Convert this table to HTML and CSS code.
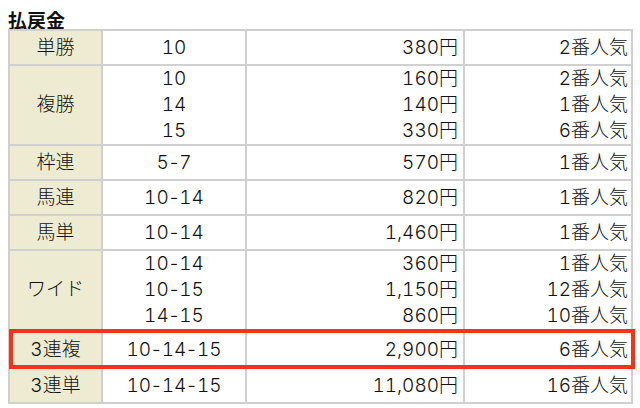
FILE: index.html
```html
<!DOCTYPE html>
<html lang="ja">
<head>
<meta charset="utf-8">
<link rel="stylesheet" href="styles.css">
</head>
<body>
<div class="payout">
  <h2 class="title">払戻金</h2>
  <div class="table-wrap">
    <table class="pay-table">
      <colgroup>
        <col class="c-type"><col class="c-num"><col class="c-yen"><col class="c-pop">
      </colgroup>
      <tr>
        <th class="type">単勝</th><td class="num">10</td><td class="yen">380円</td><td class="pop">2番人気</td>
      </tr>
      <tr class="multi">
        <th class="type">複勝</th><td class="num">10<br>14<br>15</td><td class="yen">160円<br>140円<br>330円</td><td class="pop">2番人気<br>1番人気<br>6番人気</td>
      </tr>
      <tr>
        <th class="type">枠連</th><td class="num">5<span class="dash">-</span>7</td><td class="yen">570円</td><td class="pop">1番人気</td>
      </tr>
      <tr>
        <th class="type">馬連</th><td class="num">10<span class="dash">-</span>14</td><td class="yen">820円</td><td class="pop">1番人気</td>
      </tr>
      <tr>
        <th class="type">馬単</th><td class="num">10<span class="dash">-</span>14</td><td class="yen">1,460円</td><td class="pop">1番人気</td>
      </tr>
      <tr class="multi">
        <th class="type">ワイド</th><td class="num">10<span class="dash">-</span>14<br>10<span class="dash">-</span>15<br>14<span class="dash">-</span>15</td><td class="yen">360円<br>1,150円<br>860円</td><td class="pop">1番人気<br>12番人気<br>10番人気</td>
      </tr>
      <tr class="tall">
        <th class="type">3連複</th><td class="num">10<span class="dash">-</span>14<span class="dash">-</span>15</td><td class="yen">2,900円</td><td class="pop">6番人気</td>
      </tr>
      <tr>
        <th class="type">3連単</th><td class="num">10<span class="dash">-</span>14<span class="dash">-</span>15</td><td class="yen">11,080円</td><td class="pop">16番人気</td>
      </tr>
    </table>
    <div class="highlight"></div>
  </div>
</div>
</body>
</html>
```
FILE: styles.css
```css
* {
  box-sizing: border-box;
}

html, body {
  margin: 0;
  padding: 0;
  background: #ffffff;
}

body {
  font-family: Inter, "Noto Sans CJK JP", "Noto Sans", sans-serif;
  color: #111111;
}

.payout {
  padding: 10px 0 0 8px;
}

.title {
  margin: 0;
  font-family: "Noto Sans CJK JP", sans-serif;
  font-size: 19px;
  line-height: 19px;
  font-weight: bold;
  color: #111111;
}

.table-wrap {
  position: relative;
  width: 625px;
}

.pay-table {
  border-collapse: separate;
  border-spacing: 0;
  table-layout: fixed;
  width: 625px;
  border-top: 2px solid #d0d0d0;
  border-left: 2px solid #d0d0d0;
  font-size: 19px;
  font-weight: 300;
  font-variant-numeric: tabular-nums;
}

.c-type { width: 93px; }
.c-num { width: 144px; }
.c-yen { width: 218px; }
.c-pop { width: 168px; }

.pay-table th,
.pay-table td {
  border-right: 2px solid #d0d0d0;
  border-bottom: 2px solid #d0d0d0;
  padding: 4px 0 3px;
  line-height: 26px;
  font-weight: 300;
  vertical-align: middle;
  white-space: nowrap;
}

.pay-table .multi th,
.pay-table .multi td {
  padding: 0;
}

.pay-table .tall th,
.pay-table .tall td {
  padding: 6px 0 4px;
}

.dash {
  font-variant-numeric: normal;
  padding: 0 1px;
}

.type {
  background: #edecd3;
  text-align: center;
}

.num {
  text-align: center;
}

.yen {
  text-align: right;
  padding-right: 5px !important;
}

.pop {
  text-align: right;
  padding-right: 3px !important;
}

.highlight {
  position: absolute;
  left: 1px;
  top: 300px;
  width: 626px;
  height: 40px;
  border: 4px solid #f4331b;
  pointer-events: none;
}
```
